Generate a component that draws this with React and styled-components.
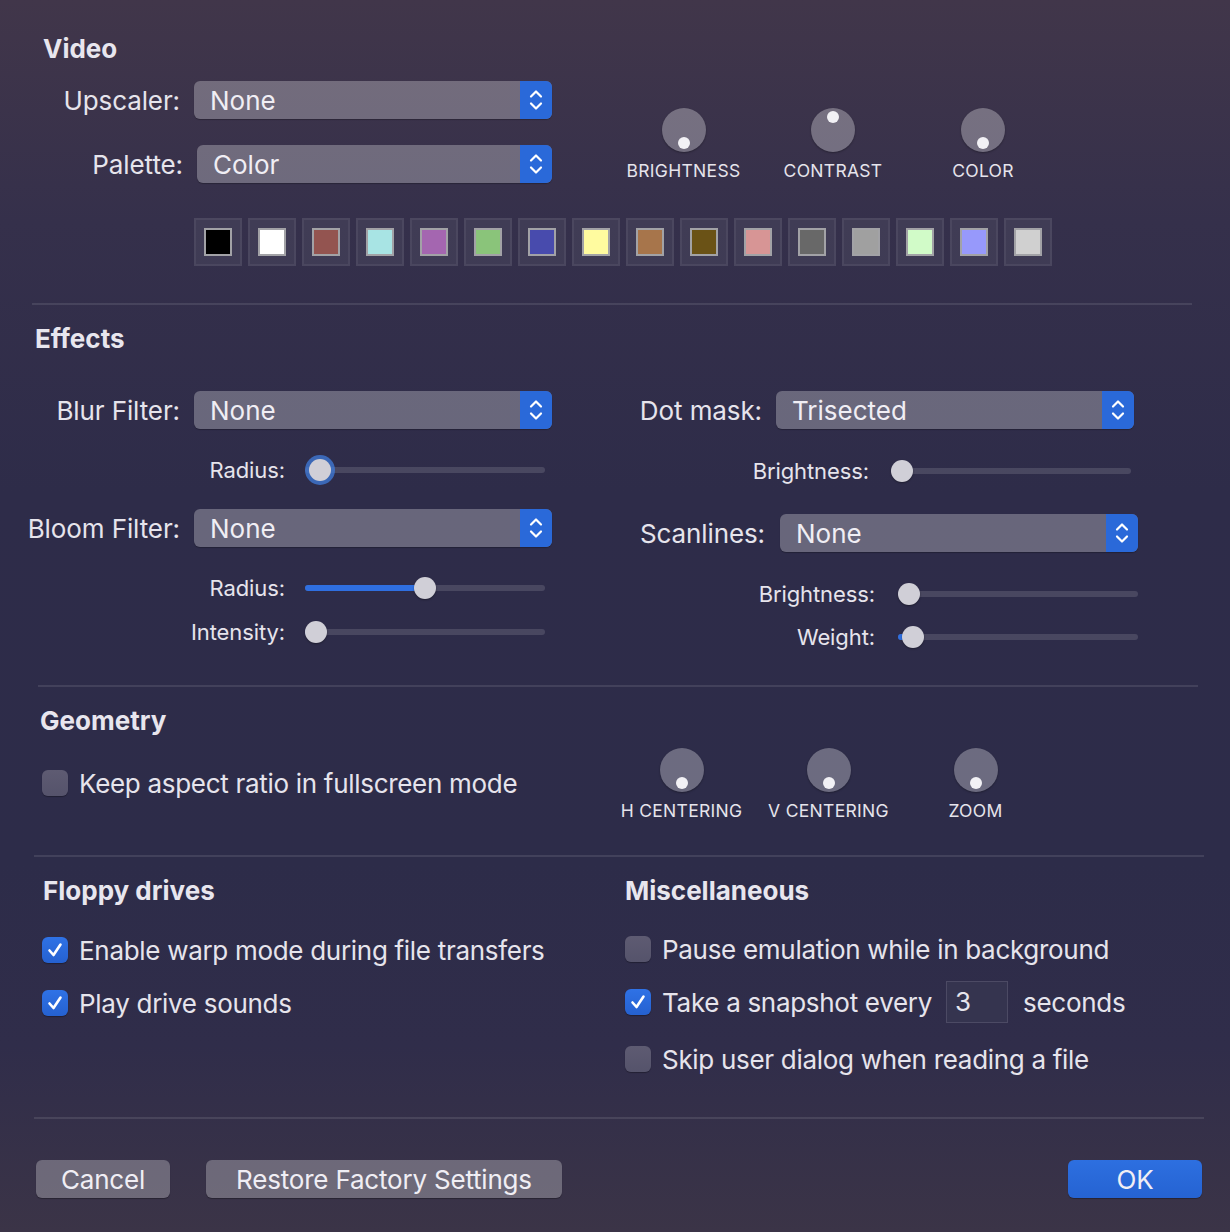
import React from "react";
import styled, { createGlobalStyle } from "styled-components";

const GlobalStyle = createGlobalStyle`
  html, body {
    margin: 0;
    padding: 0;
    background: #2e2c48;
  }
`;

const Window = styled.div`
  width: 1230px;
  height: 1232px;
  overflow: hidden;
  box-sizing: border-box;
  display: flex;
  flex-direction: column;
  font-family: Inter, "Noto Sans", "Liberation Sans", sans-serif;
  font-size: 26px;
  color: #e6e4ec;
  background: linear-gradient(
    180deg,
    #41364a 0%,
    #35304b 18%,
    #2e2c49 40%,
    #2d2c49 70%,
    #302d4a 85%,
    #3b3447 100%
  );
`;

const SectionTitle = styled.h2`
  margin: ${(p) => p.$top}px 0 0 ${(p) => p.$left}px;
  height: 28px;
  font-size: 26px;
  line-height: 28px;
  font-weight: 700;
  color: #e8e6ee;
`;

const Rule = styled.div`
  margin: ${(p) => p.$top}px 0 0 ${(p) => p.$left}px;
  width: ${(p) => p.$width}px;
  height: 2px;
  background: rgba(255, 255, 255, 0.1);
  flex-shrink: 0;
`;

const Body = styled.div`
  display: flex;
  align-items: flex-start;
  margin-top: ${(p) => p.$top}px;
`;

const Column = styled.div`
  display: flex;
  flex-direction: column;
  width: ${(p) => (p.$width ? `${p.$width}px` : "auto")};
  padding-left: ${(p) => p.$pad || 0}px;
  margin-top: ${(p) => p.$top || 0}px;
  flex-shrink: 0;
`;

const Row = styled.div`
  display: flex;
  align-items: center;
  height: ${(p) => p.$height || 30}px;
  margin-top: ${(p) => p.$top || 0}px;
`;

const FieldLabel = styled.span`
  width: ${(p) => p.$width}px;
  margin-right: ${(p) => p.$gap}px;
  text-align: right;
  white-space: nowrap;
  font-size: ${(p) => (p.$small ? 22 : 26)}px;
  letter-spacing: -0.1px;
  flex-shrink: 0;
`;

const Popup = styled.div`
  width: ${(p) => p.$width}px;
  height: 38px;
  display: flex;
  align-items: stretch;
  border-radius: 6px;
  background: rgba(255, 255, 255, 0.28);
  box-shadow: 0 1px 1px rgba(0, 0, 0, 0.25);
  overflow: hidden;
`;

const PopupText = styled.span`
  flex: 1;
  padding-left: 16px;
  line-height: 40px;
  font-size: 26px;
  color: #f0eef4;
`;

const Stepper = styled.span`
  width: 32px;
  display: flex;
  align-items: center;
  justify-content: center;
  background: #2a69d9;
`;

const Track = styled.div`
  position: relative;
  width: ${(p) => p.$width}px;
  height: 6px;
  border-radius: 3px;
  background: rgba(255, 255, 255, 0.13);
`;

const TrackFill = styled.div`
  height: 100%;
  border-radius: 3px;
  background: #2f6fe0;
`;

const Thumb = styled.div`
  position: absolute;
  top: -8px;
  width: 22px;
  height: 22px;
  border-radius: 50%;
  background: #d0cfd7;
  box-shadow: ${(p) =>
    p.$focus
      ? "0 0 0 4px rgba(64, 124, 220, 0.75)"
      : "0 1px 2px rgba(0, 0, 0, 0.35)"};
`;

const KnobGroup = styled.div`
  display: flex;
  margin-top: ${(p) => p.$top}px;
  margin-left: ${(p) => p.$left}px;
`;

const KnobCell = styled.div`
  width: ${(p) => p.$width}px;
  display: flex;
  flex-direction: column;
  align-items: center;
`;

const KnobFace = styled.div`
  position: relative;
  width: 44px;
  height: 44px;
  border-radius: 50%;
  background: rgba(255, 255, 255, 0.3);
  box-shadow: 0 1px 2px rgba(0, 0, 0, 0.3);
`;

const KnobDot = styled.div`
  position: absolute;
  left: 16px;
  top: ${(p) => (p.$up ? 3 : 29)}px;
  width: 12px;
  height: 12px;
  border-radius: 50%;
  background: #f2f1f5;
`;

const KnobLabel = styled.span`
  margin-top: 8px;
  font-size: 17.5px;
  line-height: 22px;
  letter-spacing: 0.3px;
  color: #e6e4ec;
  white-space: nowrap;
`;

const Swatches = styled.div`
  display: flex;
  gap: 6px;
  margin: ${(p) => p.$top}px 0 0 ${(p) => p.$left}px;
`;

const SwatchBox = styled.div`
  width: 48px;
  height: 48px;
  box-sizing: border-box;
  display: flex;
  align-items: center;
  justify-content: center;
  background: rgba(255, 255, 255, 0.06);
  border: 2px solid rgba(255, 255, 255, 0.06);
`;

const SwatchColor = styled.div`
  width: 28px;
  height: 28px;
  box-sizing: border-box;
  border: 2px solid #a2a2a6;
  background: ${(p) => p.$color};
`;

const Box = styled.span`
  width: 26px;
  height: 26px;
  border-radius: 6px;
  margin-right: 11px;
  display: flex;
  align-items: center;
  justify-content: center;
  flex-shrink: 0;
  background: ${(p) =>
    p.$checked
      ? "linear-gradient(180deg, #2f72e6 0%, #2561d0 100%)"
      : "linear-gradient(180deg, #5e5b72 0%, #55536b 100%)"};
  box-shadow: 0 1px 1px rgba(0, 0, 0, 0.3);
`;

const CheckText = styled.span`
  white-space: nowrap;
  font-size: 26px;
  letter-spacing: -0.3px;
`;

const NumberField = styled.span`
  width: 62px;
  height: 42px;
  box-sizing: border-box;
  margin: 0 15px 0 14px;
  padding-left: 8px;
  line-height: 40px;
  background: #35344f;
  border: 1px solid #4c4a64;
  font-size: 26px;
`;

const Footer = styled.div`
  display: flex;
  gap: 36px;
  margin-top: ${(p) => p.$top}px;
  padding: 0 28px 0 36px;
`;

const Button = styled.button`
  width: ${(p) => p.$width}px;
  height: 38px;
  border: none;
  border-radius: 6px;
  font-family: inherit;
  font-size: 26px;
  letter-spacing: -0.2px;
  color: #f0eef4;
  background: ${(p) =>
    p.$primary
      ? "linear-gradient(180deg, #2d6fe0 0%, #2563d2 100%)"
      : "rgba(255, 255, 255, 0.27)"};
  box-shadow: 0 1px 1px rgba(0, 0, 0, 0.3);
  margin-left: ${(p) => (p.$push ? "auto" : "0")};
  padding: 0;
`;

const Chevrons = () => (
  <svg width="16" height="26" viewBox="0 0 16 26" fill="none">
    <path
      d="M3 9.5 L8 4.5 L13 9.5"
      stroke="#fff"
      strokeWidth="2.2"
      strokeLinecap="round"
      strokeLinejoin="round"
    />
    <path
      d="M3 16.5 L8 21.5 L13 16.5"
      stroke="#fff"
      strokeWidth="2.2"
      strokeLinecap="round"
      strokeLinejoin="round"
    />
  </svg>
);

const Tick = () => (
  <svg width="18" height="18" viewBox="0 0 18 18" fill="none">
    <path
      d="M3.5 9.5 L7.5 14 L14.5 3.5"
      stroke="#fff"
      strokeWidth="2.6"
      strokeLinecap="round"
      strokeLinejoin="round"
    />
  </svg>
);

const PopupField = ({ label, value, labelWidth, gap = 14, width = 358, top }) => (
  <Row $height={38} $top={top}>
    <FieldLabel $width={labelWidth} $gap={gap}>
      {label}
    </FieldLabel>
    <Popup $width={width}>
      <PopupText>{value}</PopupText>
      <Stepper>
        <Chevrons />
      </Stepper>
    </Popup>
  </Row>
);

const SliderField = ({ label, labelWidth, gap = 20, value, fill = 0, focus, top }) => (
  <Row $top={top}>
    <FieldLabel $width={labelWidth} $gap={gap} $small>
      {label}
    </FieldLabel>
    <Track $width={240}>
      <TrackFill style={{ width: `${fill}px` }} />
      <Thumb $focus={focus} style={{ left: `${value * 218}px` }} />
    </Track>
  </Row>
);

const Knob = ({ label, up, width }) => (
  <KnobCell $width={width}>
    <KnobFace>
      <KnobDot $up={up} />
    </KnobFace>
    <KnobLabel>{label}</KnobLabel>
  </KnobCell>
);

const Check = ({ checked, children, top }) => (
  <Row $top={top}>
    <Box $checked={checked}>{checked && <Tick />}</Box>
    <CheckText>{children}</CheckText>
  </Row>
);

const palette = [
  "#000000",
  "#ffffff",
  "#935450",
  "#a8e4e4",
  "#a466b0",
  "#8ac47a",
  "#484bad",
  "#fffb9f",
  "#a7754b",
  "#6a5216",
  "#d79595",
  "#686868",
  "#a0a0a0",
  "#d1fbc8",
  "#9799fb",
  "#d0d0d0",
];

const App = () => {
  return (
    <Window>
      <GlobalStyle />

      <SectionTitle $top={35} $left={43}>
        Video
      </SectionTitle>
      <Body $top={18}>
        <Column $width={552}>
          <PopupField label="Upscaler:" value="None" labelWidth={180} />
          <PopupField
            label="Palette:"
            value="Color"
            labelWidth={183}
            width={355}
            top={26}
          />
        </Column>
        <KnobGroup $top={27} $left={57}>
          <Knob label="BRIGHTNESS" width={149} />
          <Knob label="CONTRAST" up width={150} />
          <Knob label="COLOR" width={150} />
        </KnobGroup>
      </Body>
      <Swatches $top={35} $left={194}>
        {palette.map((c) => (
          <SwatchBox key={c}>
            <SwatchColor $color={c} />
          </SwatchBox>
        ))}
      </Swatches>
      <Rule $top={37} $left={32} $width={1160} />

      <SectionTitle $top={20} $left={35}>
        Effects
      </SectionTitle>
      <Body $top={38}>
        <Column $width={600}>
          <PopupField label="Blur Filter:" value="None" labelWidth={180} />
          <SliderField label="Radius:" labelWidth={285} value={0.02} focus top={26} />
          <PopupField label="Bloom Filter:" value="None" labelWidth={180} top={24} />
          <SliderField label="Radius:" labelWidth={285} value={0.5} fill={118} top={26} />
          <SliderField label="Intensity:" labelWidth={285} value={0} fill={4} top={14} />
        </Column>
        <Column>
          <PopupField label="Dot mask:" value="Trisected" labelWidth={162} />
          <SliderField label="Brightness:" labelWidth={269} gap={22} value={0} top={27} />
          <PopupField
            label="Scanlines:"
            value="None"
            labelWidth={165}
            gap={15}
            top={28}
          />
          <SliderField label="Brightness:" labelWidth={275} gap={23} value={0} top={27} />
          <SliderField
            label="Weight:"
            labelWidth={275}
            gap={23}
            value={0.02}
            fill={8}
            top={13}
          />
        </Column>
      </Body>
      <Rule $top={33} $left={38} $width={1160} />

      <SectionTitle $top={20} $left={40}>
        Geometry
      </SectionTitle>
      <Body $top={0}>
        <Column $width={566} $pad={42} $top={33}>
          <Check>Keep aspect ratio in fullscreen mode</Check>
        </Column>
        <KnobGroup $top={13} $left={0}>
          <Knob label="H CENTERING" width={147} />
          <Knob label="V CENTERING" width={147} />
          <Knob label="ZOOM" width={147} />
        </KnobGroup>
      </Body>
      <Rule $top={33} $left={34} $width={1170} />

      <Body $top={20}>
        <Column $width={583} $pad={42}>
          <SectionTitle $top={0} $left={1}>
            Floppy drives
          </SectionTitle>
          <Check checked top={30}>
            Enable warp mode during file transfers
          </Check>
          <Check checked top={23}>
            Play drive sounds
          </Check>
        </Column>
        <Column>
          <SectionTitle $top={0} $left={0}>
            Miscellaneous
          </SectionTitle>
          <Check top={29}>Pause emulation while in background</Check>
          <Row $height={42} $top={17}>
            <Box $checked>
              <Tick />
            </Box>
            <CheckText>Take a snapshot every</CheckText>
            <NumberField>3</NumberField>
            <CheckText>seconds</CheckText>
          </Row>
          <Check top={21}>Skip user dialog when reading a file</Check>
        </Column>
      </Body>
      <Rule $top={43} $left={34} $width={1170} />

      <Footer $top={41}>
        <Button $width={134}>Cancel</Button>
        <Button $width={356}>Restore Factory Settings</Button>
        <Button $width={134} $primary $push>
          OK
        </Button>
      </Footer>
    </Window>
  );
};

export default App;
